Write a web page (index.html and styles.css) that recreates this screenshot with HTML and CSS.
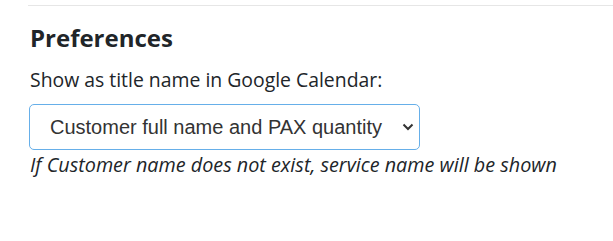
FILE: index.html
```html
<!DOCTYPE html>
<html lang="en">
<head>
    <meta charset="UTF-8">
    <meta name="viewport" content="width=device-width, initial-scale=1.0">
    <title>Preferences</title>
    <link rel="stylesheet" href="styles.css">
</head>
<body>
    <div class="settings">
        <hr class="divider">

        <!-- Preferences -->
        <div class="preferences">
            <h2 class="section-title">Preferences</h2>
            <label class="field-label" for="title-name">Show as title name in Google Calendar:</label>
            <div class="select-wrap">
                <select id="title-name" class="title-select">
                    <option>Customer full name and PAX quantity</option>
                    <option>Customer full name</option>
                    <option>Service name</option>
                </select>
                <svg class="chevron" width="12" height="8" viewBox="0 0 12 8">
                    <path d="M1.5 1.5 L6 6 L10.5 1.5" fill="none" stroke="#333" stroke-width="2"/>
                </svg>
            </div>
            <p class="hint">If Customer name does not exist, service name will be shown</p>
        </div>
    </div>
</body>
</html>
```

FILE: styles.css
```css
body {
    font-family: "Open Sans", "Noto Sans", sans-serif;
    margin: 0;
    padding: 0;
    background-color: #fff;
    color: #212529;
}

.settings {
    padding: 5px 0 0 28px;
}

.divider {
    border: 0;
    border-top: 1px solid #e6e6e6;
    margin: 0;
}

/* Preferences */
.preferences {
    padding-left: 2px;
}
.section-title {
    font-size: 24px;
    font-weight: bold;
    margin: 17px 0 15px;
    line-height: 30px;
}
.field-label {
    display: block;
    font-size: 19.4px;
    line-height: 24px;
}
.select-wrap {
    position: relative;
    width: 391px;
    margin: 12px 0 0 -1px;
}
.title-select {
    display: block;
    width: 100%;
    height: 46px;
    padding: 0 20px;
    font-family: "Liberation Sans", Arial, sans-serif;
    font-size: 20px;
    color: #333;
    background-color: #fff;
    border: 1px solid #66afe9;
    border-radius: 5px;
    appearance: none;
    -webkit-appearance: none;
    outline: none;
}
.chevron {
    position: absolute;
    right: 6px;
    top: 19px;
    pointer-events: none;
}
.hint {
    font-size: 19.8px;
    font-style: italic;
    line-height: 26px;
    margin: 2px 0 0;
}
```
